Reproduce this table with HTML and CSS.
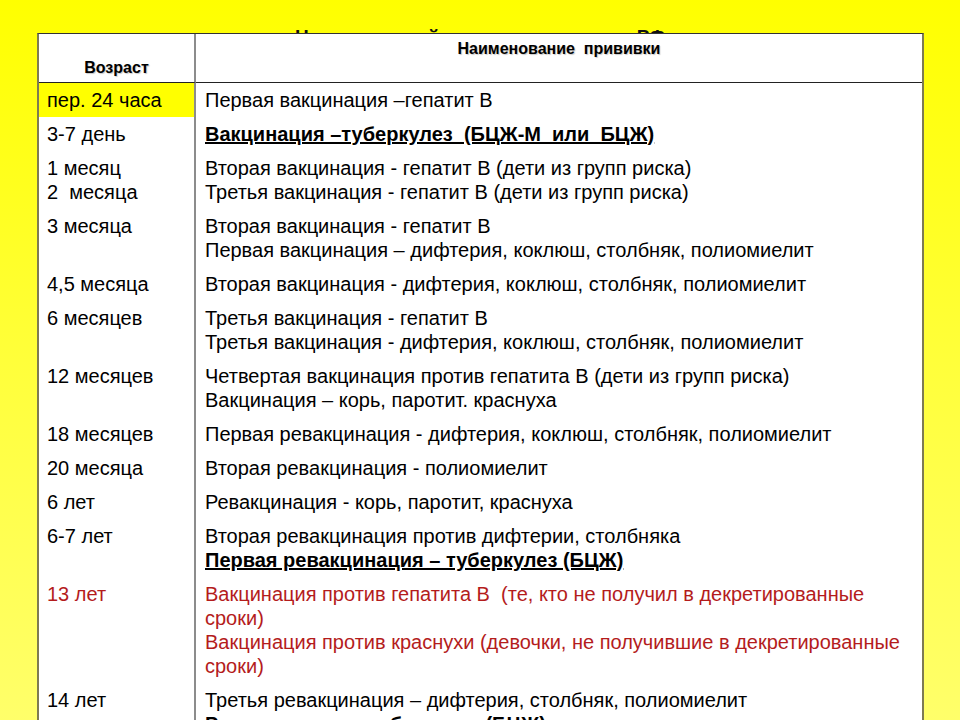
FILE: index.html
```html
<!DOCTYPE html>
<html lang="ru">
<head>
<meta charset="utf-8">
<title>Календарь прививок</title>
<link rel="stylesheet" href="styles.css">
</head>
<body>
<div class="page">
  <div class="title">Национальный календарь прививок РФ</div>
  <div class="table">
    <div class="cell age head-age">Возраст</div>
    <div class="cell name head-name">Наименование&nbsp; прививки</div>

    <div class="cell age hl">пер. 24 часа</div>
    <div class="cell name">Первая вакцинация –гепатит В</div>

    <div class="cell age">3-7 день</div>
    <div class="cell name"><span class="bu">Вакцинация –туберкулез&nbsp; (БЦЖ-М&nbsp; или&nbsp; БЦЖ)</span></div>

    <div class="cell age">1 месяц<br>2&nbsp; месяца</div>
    <div class="cell name">Вторая вакцинация - гепатит В (дети из групп риска)<br>Третья вакцинация - гепатит В (дети из групп риска)</div>

    <div class="cell age">3 месяца</div>
    <div class="cell name">Вторая вакцинация - гепатит В<br>Первая вакцинация – дифтерия, коклюш, столбняк, полиомиелит</div>

    <div class="cell age">4,5 месяца</div>
    <div class="cell name">Вторая вакцинация - дифтерия, коклюш, столбняк, полиомиелит</div>

    <div class="cell age">6 месяцев</div>
    <div class="cell name">Третья вакцинация - гепатит В<br>Третья вакцинация - дифтерия, коклюш, столбняк, полиомиелит</div>

    <div class="cell age">12 месяцев</div>
    <div class="cell name">Четвертая вакцинация против гепатита В (дети из групп риска)<br>Вакцинация – корь, паротит. краснуха</div>

    <div class="cell age">18 месяцев</div>
    <div class="cell name">Первая ревакцинация - дифтерия, коклюш, столбняк, полиомиелит</div>

    <div class="cell age">20 месяца</div>
    <div class="cell name">Вторая ревакцинация - полиомиелит</div>

    <div class="cell age">6 лет</div>
    <div class="cell name">Ревакцинация - корь, паротит, краснуха</div>

    <div class="cell age">6-7 лет</div>
    <div class="cell name">Вторая ревакцинация против дифтерии, столбняка<br><span class="bu">Первая ревакцинация – туберкулез (БЦЖ)</span></div>

    <div class="cell age red">13 лет</div>
    <div class="cell name red">Вакцинация против гепатита В&nbsp; (те, кто не получил в декретированные<br>сроки)<br>Вакцинация против краснухи (девочки, не получившие в декретированные<br>сроки)</div>

    <div class="cell age">14 лет</div>
    <div class="cell name">Третья ревакцинация – дифтерия, столбняк, полиомиелит<br><span class="bu">Ревакцинация – туберкулез (БЦЖ)</span></div>
  </div>
</div>
</body>
</html>
```
FILE: styles.css
```css
html, body {
  margin: 0;
  padding: 0;
}
body {
  background: linear-gradient(to bottom, #ffff00 0%, #ffff3a 50%, #ffff6a 100%);
  min-height: 720px;
  font-family: "Liberation Sans", Arial, sans-serif;
  color: #000;
}
.page {
  width: 960px;
  height: 720px;
  overflow: hidden;
}
.title {
  height: 33px;
  overflow: hidden;
  box-sizing: border-box;
  padding: 25px 0 0 295px;
  font-size: 19px;
  line-height: 24px;
  font-weight: bold;
  white-space: nowrap;
  word-spacing: -3px;
  color: #111;
}
.table {
  margin-left: 37px;
  width: 887px;
  box-sizing: border-box;
  background: #fff;
  border-top: 1px solid #333;
  border-left: 2px solid #7d7a52;
  border-right: 2px solid #7d7a52;
  display: grid;
  grid-template-columns: 157px 1fr;
}
.cell {
  font-size: 20px;
  line-height: 24px;
  padding: 5px 0;
  white-space: nowrap;
}
.age {
  padding-left: 8px;
  border-right: 2px solid #8c8c8c;
}
.name {
  padding-left: 9px;
}
.head-age,
.head-name {
  height: 49px;
  box-sizing: border-box;
  border-bottom: 1px solid #222;
  font-size: 16px;
  line-height: 18px;
  font-weight: bold;
  text-shadow: 1px 1px 1px rgba(0, 0, 0, 0.22);
}
.head-age {
  display: flex;
  align-items: flex-end;
  justify-content: center;
  padding: 0 0 5px 0;
}
.head-name {
  text-align: center;
  padding: 6px 0 0 0;
}
.hl {
  background: #ffff00;
}
.bu {
  font-weight: bold;
  text-decoration: underline;
}
.red {
  color: #b41c1c;
}
```
